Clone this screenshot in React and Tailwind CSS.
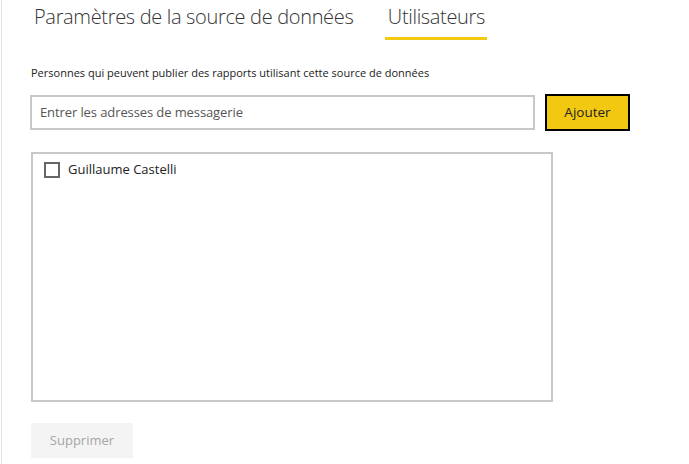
export default function App() {
  return (
    <div className="w-[689px] h-[464px] bg-white flex overflow-hidden" style={{ fontFamily: '"Open Sans", "Noto Sans", sans-serif' }}>
      <div className="w-px ml-px h-full bg-[#e6e6e6]" />
      <div className="flex flex-col pl-[28px]">
        <div className="flex items-start h-[40px]">
          <div className="ml-[4px] mt-[2px] text-[20px] font-light text-[#333] leading-[30px] tracking-[-0.33px]">Paramètres de la source de données</div>
          <div className="ml-[32px] flex flex-col items-center w-[102px]">
            <div className="mt-[2px] text-[20px] font-light text-[#333] leading-[30px] tracking-[-0.33px]">Utilisateurs</div>
            <div className="mt-[5px] h-[3px] w-full bg-[#f2c811]" />
          </div>
        </div>
        <div className="mt-[26px] ml-[1px] text-[11px] text-[#222] leading-[14px]">Personnes qui peuvent publier des rapports utilisant cette source de données</div>
        <div className="mt-[14px] flex items-center">
          <div className="w-[505px] h-[35px] border-2 border-[#c8c8c8] flex items-center pl-[8px] text-[13px] text-[#555] tracking-[-0.1px]">Entrer les adresses de messagerie</div>
          <div className="ml-[10px] w-[85px] h-[37px] border-2 border-black bg-[#f2c811] flex items-center justify-center text-[13.5px] text-[#222]">Ajouter</div>
        </div>
        <div className="mt-[21px] ml-[1px] w-[522px] h-[250px] border-2 border-[#c8c8c8] pt-[6px] pl-[11px]">
          <div className="flex items-center">
            <div className="w-[16px] h-[16px] border-2 border-[#666]" />
            <div className="ml-[8px] text-[13px] text-[#222]">Guillaume Castelli</div>
          </div>
        </div>
        <div className="mt-[21px] ml-[1px] w-[102px] h-[35px] bg-[#f4f4f4] flex items-center justify-center text-[13px] text-[#a6a6a6]">Supprimer</div>
      </div>
    </div>
  );
}
